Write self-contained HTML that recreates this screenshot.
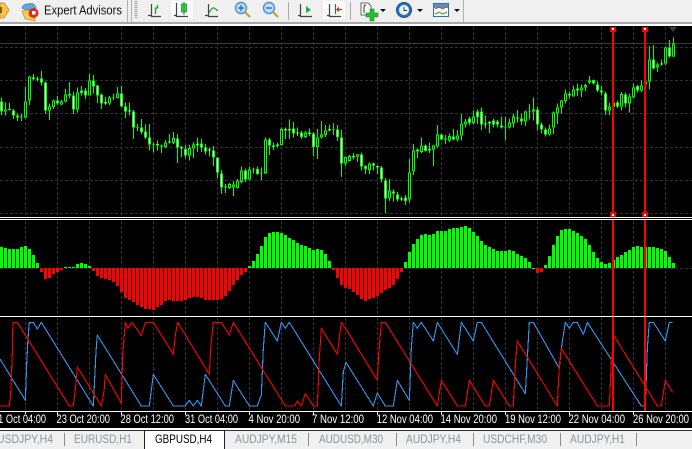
<!DOCTYPE html>
<html><head><meta charset="utf-8"><style>
html,body{margin:0;padding:0;width:692px;height:449px;overflow:hidden;background:#f0f0f0}
svg{position:absolute;left:0;top:0;display:block}
text{font-family:"Liberation Sans",sans-serif}
</style></head><body>
<svg width="692" height="449" viewBox="0 0 692 449" xmlns="http://www.w3.org/2000/svg">
<rect width="692" height="449" fill="#f0f0f0"/>
<!-- toolbar -->
<rect x="0" y="22" width="692" height="2" fill="#a8a8a8"/>
<rect x="0" y="24" width="692" height="2" fill="#fff"/>
<path d="M1 3H4L9 10L4 18H0V3Z" fill="#f5c64a" stroke="#d9903a"/>
<path d="M0 7h2v6H0z" fill="#8a5a10"/>
<path d="M22 11L30 9L35 15L35 21L25 19Z" fill="#f2cd55" stroke="#b99030" stroke-width=".7"/>
<path d="M22 8Q24 3 29 4Q34 2 36 8Q30 12 22 8Z" fill="#5fa8d8" stroke="#3a7aa8" stroke-width=".7"/>
<circle cx="33.500" cy="13" r="5" fill="#d8301a"/>
<rect x="32" y="11" width="3.500" height="3.500" fill="#fff"/>
<text x="44" y="14.500" font-size="12.500" textLength="78" lengthAdjust="spacingAndGlyphs" fill="#111">Expert Advisors</text>
<rect x="127" y="0" width="1" height="22" fill="#b0b0b0"/>
<rect x="131" y="0" width="1" height="22" fill="#b0b0b0"/>
<path d="M136 1V19" stroke="#a0a0a0" stroke-width="3" stroke-dasharray="1 1"/>
<rect x="170" y="0" width="24" height="20" fill="#fafafa" stroke="#e6e6e6"/>
<rect x="322" y="0" width="24" height="20" fill="#fafafa" stroke="#e6e6e6"/>
<g fill="none" stroke="#444" stroke-width="1.200">
<path d="M151.500 4V16.500H161M148 15.500H151"/>
<path d="M176.500 3V16.500H188M174 15.500H177"/>
<path d="M208.500 4V16.500H218M205 15.500H208"/>
<path d="M300.500 4V16.500H312M298 15.500H301"/>
<path d="M329.500 4V16.500H341M327 15.500H330"/>
</g>
<path d="M155.500 14V8H157.500V5" fill="none" stroke="#1e9c2e" stroke-width="1.300"/>
<rect x="181.500" y="4" width="5" height="8" fill="#3fdc4a" stroke="#1a8c2a" stroke-width=".8"/>
<path d="M184 2V15" stroke="#1a8c2a"/>
<path d="M209 13Q212 7 214 8T218 11" fill="none" stroke="#1e9c2e" stroke-width="1.200"/>
<path d="M306 6L311 10L306 13Z" fill="#22aa44"/>
<path d="M335.500 4V14" stroke="#2a6a9a" stroke-width="1.200"/>
<path d="M342 9.500L337 9.500M339 7.500L337 9.500L339 11.500" fill="none" stroke="#a04810" stroke-width="1.300"/>
<g>
<circle cx="241" cy="8" r="5.500" fill="#bfe0f5" stroke="#4a90cc" stroke-width="1.400"/>
<path d="M238 8H244M241 5V11" stroke="#2a70c0" stroke-width="1.400"/>
<path d="M245 12L250 17" stroke="#c8a030" stroke-width="2.200"/>
<circle cx="269" cy="8" r="5.500" fill="#bfe0f5" stroke="#4a90cc" stroke-width="1.400"/>
<path d="M266 8H272" stroke="#2a70c0" stroke-width="1.400"/>
<path d="M273 12L278 17" stroke="#c8a030" stroke-width="2.200"/>
</g>
<rect x="288" y="2" width="1" height="18" fill="#a8a8a8"/>
<rect x="350" y="2" width="1" height="18" fill="#a8a8a8"/>
<rect x="463" y="0" width="1" height="22" fill="#b0b0b0"/>
<path d="M361 3H368L371 6V15H361Z" fill="#fff" stroke="#666"/>
<path d="M364 13V7Q364 5 366 5" fill="none" stroke="#333"/>
<path d="M370 9H374V13H378V17H374V21H370V17H366V13H370Z" fill="#22c02a" stroke="#1a8020" stroke-width=".6" />
<circle cx="404" cy="10" r="7.500" fill="#2a70b8" stroke="#1c4f8c"/>
<circle cx="404" cy="10" r="5" fill="#eef4fa"/>
<path d="M404 7V10.500H407" fill="none" stroke="#333"/>
<rect x="433.500" y="3.500" width="15" height="13" fill="#fff" stroke="#3070b0"/>
<rect x="434" y="4" width="14" height="4" fill="#5a8fc8"/>
<path d="M435 9L439 7L443 9L447 6" fill="none" stroke="#c05020"/>
<path d="M435 14L439 12L443 14L447 12" fill="none" stroke="#28a038"/>
<path d="M380 9h6l-3 3zM417 9h6l-3 3zM454 9h6l-3 3z" fill="#111"/>

<!-- chart background -->
<rect x="0" y="26" width="692" height="402" fill="#000"/>
<rect x="0" y="217" width="692" height="1" fill="#fff"/>
<rect x="0" y="219" width="692" height="1" fill="#fff"/>
<rect x="0" y="316" width="692" height="1" fill="#fff"/>
<rect x="0" y="428" width="692" height="2" fill="#fff"/>
<rect x="0" y="430" width="692" height="1" fill="#333"/>

<!-- grid -->
<g shape-rendering="crispEdges" fill="none" stroke="#303030" stroke-width="1" stroke-dasharray="3 2">
<path d="M0 47.500H692M0 80.500H692M0 113.500H692M0 147.500H692M0 180.500H692M0 213.500H692M0 268.500H692"/>
<path d="M25.500 27V216M57.500 27V216M89.500 27V216M121.500 27V216M153.500 27V216M185.500 27V216M217.500 27V216M249.500 27V216M281.500 27V216M313.500 27V216M345.500 27V216M377.500 27V216M409.500 27V216M441.500 27V216M473.500 27V216M505.500 27V216M537.500 27V216M569.500 27V216M601.500 27V216M633.500 27V216M665.500 27V216"/>
<path d="M25.500 221V315M57.500 221V315M89.500 221V315M121.500 221V315M153.500 221V315M185.500 221V315M217.500 221V315M249.500 221V315M281.500 221V315M313.500 221V315M345.500 221V315M377.500 221V315M409.500 221V315M441.500 221V315M473.500 221V315M505.500 221V315M537.500 221V315M569.500 221V315M601.500 221V315M633.500 221V315M665.500 221V315"/>
<path d="M25.500 317V411M57.500 317V411M89.500 317V411M121.500 317V411M153.500 317V411M185.500 317V411M217.500 317V411M249.500 317V411M281.500 317V411M313.500 317V411M345.500 317V411M377.500 317V411M409.500 317V411M441.500 317V411M473.500 317V411M505.500 317V411M537.500 317V411M569.500 317V411M601.500 317V411M633.500 317V411M665.500 317V411"/>
</g>
<rect x="0" y="43" width="692" height="1" fill="#3a3a3a"/>
<path d="M669 27H677L673 32Z" fill="#3c3c3c"/>

<!-- candles part 1 -->
<g transform="translate(0,60) scale(.33333)" fill="none" shape-rendering="crispEdges">
<path stroke="#0f0" stroke-width="3" d="M4.500 113V165M16.500 127V167M28.500 128V152M40.500 147V177M52.500 160V183M64.500 162V183M76.500 80V175M88.500 48V135M100.500 42V62M112.500 50V65M124.500 33V77M136.500 65V162M148.500 130V180M160.500 118V147M172.500 108V135M184.500 120V135M196.500 87V127M208.500 66V115M220.500 94V162M232.500 82V157M244.500 78V107M256.500 84V117M268.500 42V107M280.500 45V100M292.500 75V129M304.500 100V147M316.500 111V135M328.500 108V135M340.500 100V120M352.500 81V116M364.500 78V141M376.500 127V174M388.500 128V167M400.500 150V237M412.500 192V213M424.500 177V222M436.500 193V237M448.500 192V272M460.500 248V278M472.500 242V272M484.500 253V279M496.500 240V264M508.500 222V250M520.500 216V252M532.500 222V309M544.500 258V291M556.500 255V295M568.500 255V302M580.500 246V294M592.500 232V276M604.500 235V276M616.500 252V284M628.500 263V289M640.500 258V318M652.500 292V354M664.500 330V402M676.500 372V399M688.500 369V387"/>
<path stroke="#0f0" stroke-width="9" d="M4.500 124V155M16.500 148V155M28.500 147V150M40.500 151V167M52.500 166V173M64.500 168V170M76.500 124V173M88.500 49V122M100.500 52V57M112.500 55V59M124.500 55V67M136.500 67V152M148.500 139V152M160.500 121V141M172.500 121V131M184.500 124V134M196.500 103V125M208.500 102V106M220.500 106V149M232.500 97V149M244.500 91V99M256.500 91V107M268.500 61V107M280.500 61V80M292.500 76V107M304.500 103V130M316.500 126V131M328.500 112V131M340.500 112V114M352.500 100V114M364.500 100V140M376.500 139V155M388.500 151V155M400.500 154V203M412.500 202V204M424.500 202V216M436.500 214V233M448.500 232V254M460.500 253V255M472.500 252V257M484.500 257V259M496.500 247V261M508.500 244V248M520.500 234V249M532.500 235V262M544.500 261V265M556.500 267V287M568.500 264V287M580.500 253V266M592.500 250V257M604.500 250V262M616.500 262V274M628.500 268V272M640.500 271V292M652.500 292V338M664.500 340V382M676.500 380V382M688.500 372V384"/>
<path stroke="#fff" stroke-width="3" d="M4.500 127V152M40.500 154V164M52.500 169V170M100.500 54V55M112.500 57V58M124.500 58V64M136.500 70V149M172.500 124V128M220.500 109V146M244.500 94V96M256.500 94V104M280.500 64V77M292.500 79V104M304.500 106V127M316.500 127V130M364.500 103V137M376.500 142V152M388.500 152V154M400.500 157V200M424.500 205V213M436.500 217V230M448.500 235V251M472.500 254V255M508.500 245V247M532.500 238V259M544.500 262V264M556.500 270V284M592.500 252V255M604.500 253V259M616.500 265V271M628.500 269V271M640.500 274V289M652.500 295V335M664.500 343V379"/>
<path stroke="#000" stroke-width="3" d="M16.500 150V153M76.500 127V170M88.500 52V119M148.500 142V149M160.500 124V138M184.500 127V131M196.500 106V122M232.500 100V146M268.500 64V104M328.500 115V128M352.500 103V111M496.500 250V258M520.500 237V246M568.500 267V284M580.500 256V263M688.500 375V381"/>
</g>
<!-- candles part 2 -->
<g transform="translate(230,60) scale(.33333)" fill="none" shape-rendering="crispEdges">
<path stroke="#0f0" stroke-width="3" d="M10.500 363V408M22.500 357V385M34.500 319V371M46.500 325V366M58.500 320V362M70.500 323V340M82.500 320V345M94.500 323V360M106.500 232V342M118.500 234V285M130.500 247V270M142.500 247V262M154.500 202V256M166.500 202V237M178.500 178V237M190.500 186V232M202.500 202V228M214.500 213V237M226.500 213V234M238.500 205V228M250.500 216V288M262.500 207V297M274.500 183V236M286.500 195V231M298.500 193V214M310.500 189V225M322.500 195V243M334.500 210V351M346.500 289V318M358.500 285V305M370.500 279V298M382.500 282V306M394.500 277V331M406.500 315V342M418.500 308V342M430.500 308V331M442.500 316V342M454.500 318V368M466.500 354V459M478.500 357V423M490.500 388V425M502.500 396V424M514.500 410V423M526.500 405V435M538.500 297V427M550.500 252V345M562.500 265V294M574.500 232V279M586.500 253V275M598.500 247V279M610.500 255V318M622.500 195V262M634.500 222V240M646.500 225V252M658.500 220V246M670.500 207V242M682.500 210V245"/>
<path stroke="#0f0" stroke-width="9" d="M10.500 373V383M22.500 361V384M34.500 331V366M46.500 331V359M58.500 328V359M70.500 327V329M82.500 327V342M94.500 339V341M106.500 238V341M118.500 238V257M130.500 256V261M142.500 253V258M154.500 207V255M166.500 207V212M178.500 207V212M190.500 205V221M202.500 217V221M214.500 217V231M226.500 217V231M238.500 217V222M250.500 221V261M262.500 232V261M274.500 223V233M286.500 211V225M298.500 207V212M310.500 208V210M322.500 208V231M334.500 232V311M346.500 291V311M358.500 288V303M370.500 288V293M382.500 283V290M394.500 283V320M406.500 318V327M418.500 310V330M430.500 310V317M442.500 318V323M454.500 322V359M466.500 361V416M478.500 391V416M490.500 394V401M502.500 403V419M514.500 415V419M526.500 413V423M538.500 337V419M550.500 271V335M562.500 268V275M574.500 256V276M586.500 256V273M598.500 267V271M610.500 256V269M622.500 223V260M634.500 223V238M646.500 235V239M658.500 228V241M670.500 229V238M682.500 226V238"/>
<path stroke="#fff" stroke-width="3" d="M46.500 334V356M82.500 330V339M118.500 241V254M130.500 258V259M142.500 255V256M166.500 209V210M178.500 209V210M190.500 208V218M202.500 218V220M214.500 220V228M238.500 219V220M250.500 224V258M298.500 209V210M322.500 211V228M334.500 235V308M370.500 290V291M394.500 286V317M406.500 321V324M430.500 312V314M442.500 320V321M454.500 325V356M466.500 364V413M490.500 396V398M502.500 406V416M514.500 416V418M526.500 416V420M562.500 270V272M586.500 259V270M598.500 268V270M634.500 226V235M670.500 232V235"/>
<path stroke="#000" stroke-width="3" d="M10.500 376V380M22.500 364V381M34.500 334V363M58.500 331V356M106.500 241V338M154.500 210V252M226.500 220V228M262.500 235V258M274.500 226V230M286.500 214V222M346.500 294V308M358.500 291V300M382.500 285V287M418.500 313V327M478.500 394V413M538.500 340V416M550.500 274V332M574.500 259V273M610.500 259V266M622.500 226V257M658.500 231V238M682.500 229V235"/>
</g>
<!-- candles part 3 -->
<g transform="translate(460,20) scale(.33333)" fill="none" shape-rendering="crispEdges">
<path stroke="#0f0" stroke-width="3" d="M4.500 282V362M16.500 297V323M28.500 290V315M40.500 272V313M52.500 268V312M64.500 262V330M76.500 286V325M88.500 303V339M100.500 295V323M112.500 300V323M124.500 289V326M136.500 290V362M148.500 295V325M160.500 280V322M172.500 270V308M184.500 280V315M196.500 271V318M208.500 252V298M220.500 232V302M232.500 260V332M244.500 308V340M256.500 322V350M268.500 314V347M280.500 274V342M292.500 250V312M304.500 240V280M316.500 208V250M328.500 214V236M340.500 196V230M352.500 190V228M364.500 193V231M376.500 190V213M388.500 168V192M400.500 178V193M412.500 184V216M424.500 198V226M436.500 215V285M448.500 248V285M460.500 238V272M472.500 242V264M484.500 216V272M496.500 218V262M508.500 220V278M520.500 190V234M532.500 195V218M544.500 182V216M556.500 184V200M568.500 78V208M580.500 75V148M592.500 128V156M604.500 118V137M616.500 80V136M628.500 60V112M640.500 52V111"/>
<path stroke="#0f0" stroke-width="9" d="M4.500 310V346M16.500 305V314M28.500 296V309M40.500 290V309M52.500 274V291M64.500 274V314M76.500 310V314M88.500 306V310M100.500 301V313M112.500 305V313M124.500 316V322M136.500 321V323M148.500 307V323M160.500 290V310M172.500 293V296M184.500 295V304M196.500 274V304M208.500 273V275M220.500 268V274M232.500 268V314M244.500 313V329M256.500 329V344M268.500 325V344M280.500 277V322M292.500 263V281M304.500 241V263M316.500 220V243M328.500 222V226M340.500 208V230M352.500 205V211M364.500 202V212M376.500 195V203M388.500 181V188M400.500 180V191M412.500 193V212M424.500 211V218M436.500 220V272M448.500 259V272M460.500 248V261M472.500 247V260M484.500 222V259M496.500 223V250M508.500 230V250M520.500 202V232M532.500 198V212M544.500 196V211M556.500 184V194M568.500 118V185M580.500 118V146M592.500 133V143M604.500 130V134M616.500 82V131M628.500 82V109M640.500 70V109"/>
<path stroke="#fff" stroke-width="3" d="M28.500 299V306M52.500 277V288M64.500 277V311M76.500 311V313M88.500 307V309M100.500 304V310M112.500 308V310M124.500 318V320M172.500 294V295M184.500 298V301M232.500 271V311M244.500 316V326M256.500 332V341M328.500 223V225M352.500 207V209M400.500 183V188M412.500 196V209M424.500 213V215M436.500 223V269M472.500 250V257M496.500 226V247M532.500 201V209M580.500 121V143M604.500 131V133M628.500 85V106"/>
<path stroke="#000" stroke-width="3" d="M4.500 313V343M16.500 308V311M40.500 293V306M148.500 310V320M160.500 293V307M196.500 277V301M268.500 328V341M280.500 280V319M292.500 266V278M304.500 244V260M316.500 223V240M340.500 211V227M364.500 205V209M376.500 198V200M388.500 184V185M448.500 262V269M460.500 251V258M484.500 225V256M508.500 233V247M520.500 205V229M544.500 199V208M556.500 187V191M568.500 121V182M592.500 136V140M616.500 85V128M640.500 73V106"/>
</g>

<!-- histogram -->
<g transform="translate(0,215) scale(.33333)" fill="none" stroke-width="9" shape-rendering="crispEdges">
<path stroke="#0f0" d="M4.500 159V96M16.500 159V99M28.500 159V102M40.500 159V102M52.500 159V102M64.500 159V96M76.500 159V93M88.500 159V102M100.500 159V120M112.500 159V144M196.500 159V156M208.500 159V156M220.500 159V156M232.500 159V147M244.500 159V144M256.500 159V147M268.500 159V153M748.500 159V153M760.500 159V138M772.500 159V117M784.500 159V93M796.500 159V66M808.500 159V54M820.500 159V51M832.500 159V51M844.500 159V54M856.500 159V60M868.500 159V69M880.500 159V75M892.500 159V84M904.500 159V90M916.500 159V93M928.500 159V99M940.500 159V105M952.500 159V102M964.500 159V105M976.500 159V117M988.500 159V138M1216.500 159V141M1228.500 159V111M1240.500 159V87M1252.500 159V72M1264.500 159V60M1276.500 159V57M1288.500 159V60M1300.500 159V57M1312.500 159V48M1324.500 159V48M1336.500 159V48M1348.500 159V42M1360.500 159V39M1372.500 159V39M1384.500 159V36M1396.500 159V33M1408.500 159V39M1420.500 159V51M1432.500 159V63M1444.500 159V78M1456.500 159V90M1468.500 159V96M1480.500 159V102M1492.500 159V108M1504.500 159V108M1516.500 159V108M1528.500 159V105M1540.500 159V108M1552.500 159V117M1564.500 159V123M1576.500 159V129M1588.500 159V141M1600.500 162V159M1636.500 159V150M1648.500 159V123M1660.500 159V90M1672.500 159V63M1684.500 159V45M1696.500 159V42M1708.500 159V42M1720.500 159V48M1732.500 159V54M1744.500 159V63M1756.500 159V72M1768.500 159V90M1780.500 159V111M1792.500 159V129M1804.500 159V141M1816.500 159V147M1828.500 159V144M1840.500 159V135M1852.500 159V126M1864.500 159V120M1876.500 159V111M1888.500 159V105M1900.500 159V96M1912.500 159V93M1924.500 159V96M1936.500 159V96M1948.500 159V96M1960.500 159V96M1972.500 159V99M1984.500 159V102M1996.500 159V108M2008.500 159V126M2020.500 159V144"/>
<path stroke="#f00" d="M124.500 159V171M136.500 159V192M148.500 159V189M160.500 159V177M172.500 159V171M184.500 159V165M280.500 159V168M292.500 159V183M304.500 159V189M316.500 159V192M328.500 159V195M340.500 159V201M352.500 159V213M364.500 159V231M376.500 159V249M388.500 159V255M400.500 159V261M412.500 159V270M424.500 159V276M436.500 159V282M448.500 159V282M460.500 159V285M472.500 159V276M484.500 159V270M496.500 159V258M508.500 159V255M520.500 159V258M532.500 159V258M544.500 159V258M556.500 159V255M568.500 159V249M580.500 159V246M592.500 159V246M604.500 159V249M616.500 159V255M628.500 159V255M640.500 159V255M652.500 159V255M664.500 159V252M676.500 159V243M688.500 159V228M700.500 159V210M712.500 159V195M724.500 159V180M736.500 159V171M1000.500 159V165M1012.500 159V189M1024.500 159V210M1036.500 159V219M1048.500 159V222M1060.500 159V231M1072.500 159V240M1084.500 159V252M1096.500 159V258M1108.500 159V252M1120.500 159V249M1132.500 159V243M1144.500 159V234M1156.500 159V225M1168.500 159V219M1180.500 159V210M1192.500 159V192M1204.500 159V171M1612.500 159V174M1624.500 159V171"/>
</g>

<!-- lines window -->
<g transform="translate(0,315) scale(.33333)" fill="none" stroke-width="3.300" stroke-linejoin="round" shape-rendering="crispEdges">
<path stroke="#3296f0" d="M0 132L76 256L80 150L84 70L88 22H100L112 42L124 22L280 273L288 110L292 60L424 273H448L460 178L520 273H556L568 256L580 273L592 256L604 273L616 178L676 273H688L700 196L748 273H772L784 240L790 100L796 22L832 78L844 22L856 40L868 22L1024 273L1030 170L1038 142L1120 273L1132 234L1156 273H1180L1192 196L1228 256L1234 100L1240 22L1252 40L1264 22L1300 78L1312 22L1372 118L1384 22L1420 78L1432 22H1444L1576 236L1582 130L1588 22H1600L1678 160L1684 100L1696 22L1708 40L1720 22H1732L1750 58L1762 22L1924 273H1936L1942 100L1948 22H1960L1996 78L2008 22H2018"/>
<path stroke="#f00" d="M0 273H28L32 240L37 112V60L40 22H52L208 273H220L228 205L232 156L304 273L312 230L316 178L364 265L368 120L376 22L384 40L396 22L424 62L436 22H460L520 118L526 60L533 22L628 178L632 100L640 22H664L688 60L700 22L856 273H884L892 258L904 273L916 236L940 273H952L958 130L964 40L1012 118L1024 22L1038 42L1132 196L1136 120L1144 22H1156L1312 273L1324 196L1372 273H1396L1408 196L1456 273H1468L1480 196L1528 273H1540L1546 150L1552 78L1672 273L1678 150L1684 100L1792 273H1828L1834 140L1842 62L1972 273H1984L1996 196L2018 232"/>
</g>

<!-- red vertical lines -->
<g shape-rendering="crispEdges">
<rect x="612" y="28" width="2" height="189" fill="#f00"/>
<rect x="644" y="28" width="2" height="189" fill="#f00"/>
<rect x="612" y="220" width="2" height="96" fill="#f00"/>
<rect x="644" y="220" width="2" height="96" fill="#f00"/>
<rect x="612" y="317" width="2" height="94" fill="#f00"/>
<rect x="644" y="317" width="2" height="94" fill="#f00"/>
<rect x="610" y="27" width="6" height="5" fill="#f00"/><rect x="612" y="28" width="2" height="2" fill="#fff"/>
<rect x="642" y="27" width="6" height="5" fill="#f00"/><rect x="644" y="28" width="2" height="2" fill="#fff"/>
<rect x="610" y="212" width="6" height="5" fill="#f00"/><rect x="612" y="214" width="2" height="2" fill="#fff"/>
<rect x="642" y="212" width="6" height="5" fill="#f00"/><rect x="644" y="214" width="2" height="2" fill="#fff"/>
</g>

<!-- time axis -->
<g shape-rendering="crispEdges">
<rect x="0" y="411" width="692" height="1" fill="#fff"/>
<path stroke="#fff" d="M25.500 412V414M57.500 411V415M121.500 411V415M185.500 411V415M249.500 411V415M313.500 411V415M377.500 411V415M441.500 411V415M505.500 411V415M569.500 411V415M633.500 411V415"/>
</g>
<g font-size="11.500" fill="#fff">
<text x="-7" y="423" textLength="53" lengthAdjust="spacingAndGlyphs">21 Oct 04:00</text>
<text x="56.500" y="423" textLength="53.500" lengthAdjust="spacingAndGlyphs">23 Oct 20:00</text>
<text x="120.500" y="423" textLength="53.500" lengthAdjust="spacingAndGlyphs">28 Oct 12:00</text>
<text x="185" y="423" textLength="53" lengthAdjust="spacingAndGlyphs">31 Oct 04:00</text>
<text x="248.500" y="423" textLength="51.500" lengthAdjust="spacingAndGlyphs">4 Nov 20:00</text>
<text x="312" y="423" textLength="52" lengthAdjust="spacingAndGlyphs">7 Nov 12:00</text>
<text x="376.700" y="423" textLength="56.300" lengthAdjust="spacingAndGlyphs">12 Nov 04:00</text>
<text x="440.500" y="423" textLength="56.500" lengthAdjust="spacingAndGlyphs">14 Nov 20:00</text>
<text x="505" y="423" textLength="56" lengthAdjust="spacingAndGlyphs">19 Nov 12:00</text>
<text x="568.500" y="423" textLength="56.500" lengthAdjust="spacingAndGlyphs">22 Nov 04:00</text>
<text x="633" y="423" textLength="56" lengthAdjust="spacingAndGlyphs">26 Nov 20:00</text>
</g>

<!-- tabs -->
<rect x="144" y="431" width="80" height="18" fill="#fff"/>
<path d="M144.500 449V430.500H224.500V449" fill="none" stroke="#222" shape-rendering="crispEdges"/>
<g fill="#8c8c8c" shape-rendering="crispEdges">
<rect x="64" y="433" width="1" height="13"/><rect x="308" y="433" width="1" height="13"/><rect x="396" y="433" width="1" height="13"/><rect x="473" y="433" width="1" height="13"/><rect x="560" y="433" width="1" height="13"/><rect x="636" y="433" width="1" height="13"/>
</g>
<g font-size="12" fill="#8d90a0">
<text x="-3" y="443" textLength="56" lengthAdjust="spacingAndGlyphs">USDJPY,H4</text>
<text x="74" y="443" textLength="58" lengthAdjust="spacingAndGlyphs">EURUSD,H1</text>
<text x="155" y="443" textLength="57" lengthAdjust="spacingAndGlyphs" fill="#000">GBPUSD,H4</text>
<text x="235" y="443" textLength="62" lengthAdjust="spacingAndGlyphs">AUDJPY,M15</text>
<text x="319" y="443" textLength="64" lengthAdjust="spacingAndGlyphs">AUDUSD,M30</text>
<text x="406" y="443" textLength="55" lengthAdjust="spacingAndGlyphs">AUDJPY,H4</text>
<text x="483" y="443" textLength="64" lengthAdjust="spacingAndGlyphs">USDCHF,M30</text>
<text x="570" y="443" textLength="55" lengthAdjust="spacingAndGlyphs">AUDJPY,H1</text>
</g>
</svg>
</body></html>
